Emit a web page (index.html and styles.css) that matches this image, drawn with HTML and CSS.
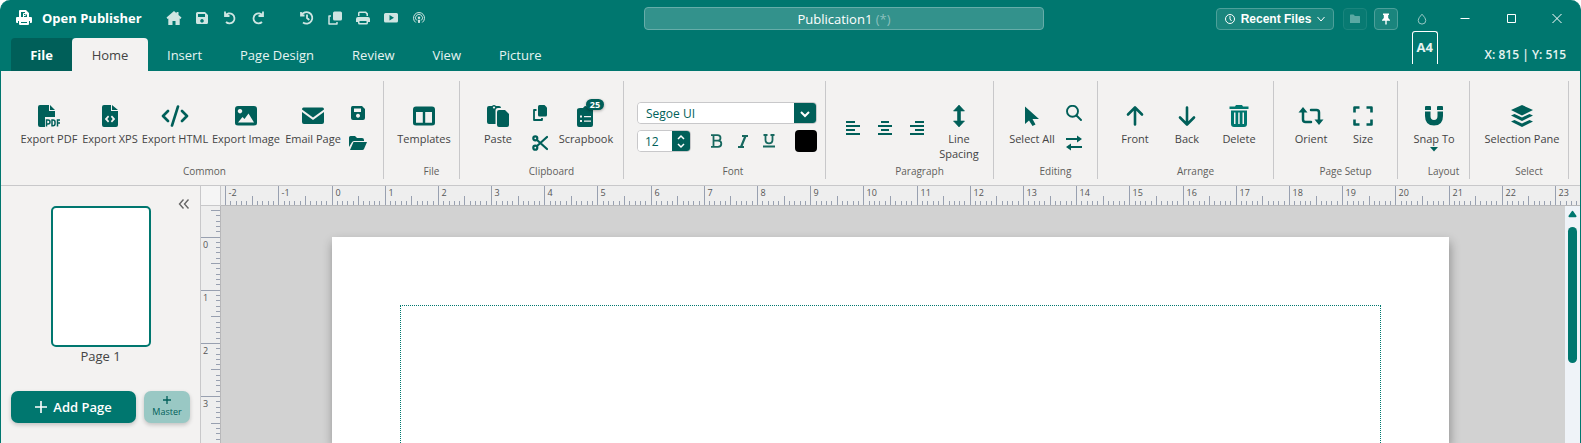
FILE: index.html
```html
<!DOCTYPE html>
<html lang="en">
<head>
<meta charset="utf-8">
<title>Open Publisher</title>
<link rel="stylesheet" href="styles.css">
</head>
<body>
<div class="app">
  <header class="titlebar">
    <div class="title-left">
      <svg class="logo" viewBox="0 0 18 18" fill="currentColor"><path d="M4 8V2q0-1 1-1h6l3 3v4h-2V5h-2V3H6v5zM2 8h14q1 0 1 1v4q0 1-1 1h-1v-2H3v2H2q-1 0-1-1V9q0-1 1-1zM4 12h10v3q0 1-1 1H5q-1 0-1-1zm2 1v1h6v-1z" fill-rule="evenodd"/><path d="M8.500 8V4.500H10q1 0 1 1t-1 1H8.500" fill="none" stroke="currentColor"/></svg>
      <h1 class="brand">Open Publisher</h1>
      <div class="quick">
        <button class="quick-btn" aria-label="Start"><svg viewBox="0 0 16 16"><path d="M8 1 0.500 7.600 1.500 9l.8-.6V15h4.200v-4h3v4h4.200V8.400l.8.6 1-1.400L12.500 5V2h-2v1.200z"/></svg></button>
        <button class="quick-btn" aria-label="Save"><svg viewBox="0 0 16 16"><path fill-rule="evenodd" d="M3.500 2H11l3 3v7.500q0 1.500-1.500 1.500h-9Q2 14 2 12.500v-9Q2 2 3.500 2zM4 4v3h7V4zm4 5a1.800 1.800 0 1 0 .01 0z"/></svg></button>
        <button class="quick-btn" aria-label="Undo"><svg viewBox="0 0 16 16" class="line"><path d="M3 1.500V6h4.500M3.200 5.800A5 5 0 1 1 4 12"/></svg></button>
        <button class="quick-btn" aria-label="Redo"><svg viewBox="0 0 16 16" class="line"><path d="M13 1.500V6H8.500M12.800 5.800A5 5 0 1 0 12 12"/></svg></button>
      </div>
      <div class="quick">
        <button class="quick-btn" aria-label="History"><svg viewBox="0 0 16 16" class="line"><path d="M2 2v3.500h3.500M2.300 5.300A5.800 5.800 0 1 1 4 12.500M8 4.500V8l2.300 2"/></svg></button>
        <button class="quick-btn" aria-label="Copy"><svg viewBox="0 0 16 16"><rect x="6" y="1.500" width="9" height="9" rx="1.500"/><path d="M4 6H2v8h8v-2" fill="none" stroke="currentColor" stroke-width="1.500" stroke-linejoin="round"/></svg></button>
        <button class="quick-btn" aria-label="Print"><svg viewBox="0 0 16 16"><path fill-rule="evenodd" d="M3 6V3q0-1.500 1.500-1.500H11L13 3.500V6h-1.500V4.500L10.300 3H4.500v3zM3 7h10q2 0 2 2v3h-2v-2H3v2H1V9q0-2 2-2zM3 10h10v3q0 1.500-1.500 1.500h-7Q3 14.500 3 13zm1.500 1v2h7v-2z"/></svg></button>
        <button class="quick-btn" aria-label="Present"><svg viewBox="0 0 16 16"><path fill-rule="evenodd" d="M2.500 3h11Q15 3 15 4.500v6.500q0 1.500-1.500 1.500h-11Q1 12.500 1 11V4.500Q1 3 2.500 3zM6.500 5v5.500L11 7.800z"/></svg></button>
        <button class="quick-btn" aria-label="Broadcast"><svg viewBox="0 0 16 16"><g fill="none" stroke="currentColor"><path d="M4.800 12.500a5.500 5.500 0 1 1 6.400 0"/><path d="M5.500 10.300a3.500 3.500 0 1 1 5 0"/></g><circle cx="8" cy="7.800" r="1.300"/><path d="M6.700 9.800h2.600L8.800 13H7.200z"/></svg></button>
      </div>
    </div>
    <div class="doc-name">Publication1 <span class="doc-dirty">(*)</span></div>
    <div class="title-right">
      <button class="chip recent"><svg class="i12 thin" viewBox="0 0 12 12"><circle cx="6" cy="6" r="4.500"/><path d="M6 3v3l1.500 2"/></svg>Recent Files<svg class="i10 thin" viewBox="0 0 10 10"><path d="M1.500 3 5 7l3.500-4"/></svg></button>
      <button class="chip square faint" aria-label="Folder"><svg class="i12" viewBox="0 0 12 12"><path d="M1.500 1.500h3L6 3h4.500l.5.500V10H1V2z"/></svg></button>
      <button class="chip square" aria-label="Pin"><svg class="i12" viewBox="0 0 12 12"><path d="M3 .5h6V2H8.200v3L10 7v.8H6.700v3.700H5.300V7.800H2V7l1.800-2V2H3z"/></svg></button>
      <button class="win drop" aria-label="Theme"><svg class="i12 thin" viewBox="0 0 12 12"><path d="M6 1.200Q2.200 5.200 2.200 7.300a3.800 3.800 0 0 0 7.600 0Q9.800 5.200 6 1.200z"/></svg></button>
      <button class="win" aria-label="Minimize"><svg class="i12 thin" viewBox="0 0 12 12"><path d="M1.500 5.500h9"/></svg></button>
      <button class="win" aria-label="Maximize"><svg class="i12 thin" viewBox="0 0 12 12"><path d="M2.500 1.500h8v8h-8z"/></svg></button>
      <button class="win" aria-label="Close"><svg class="i12 thin" viewBox="0 0 12 12"><path d="M1.500 1l9 9M10.500 1l-9 9"/></svg></button>
    </div>
  </header>

  <nav class="tabs">
    <button class="tab tab-file">File</button>
    <button class="tab tab-active">Home</button>
    <button class="tab">Insert</button>
    <button class="tab">Page Design</button>
    <button class="tab">Review</button>
    <button class="tab">View</button>
    <button class="tab">Picture</button>
    <div class="status">
      <span class="paper">A4</span>
      <span class="coords">X: 815 | Y: 515</span>
    </div>
  </nav>

  <section class="ribbon">
    <div class="group g-common">
      <div class="tools">
        <button class="tool w54"><svg viewBox="0 0 22 22"><path d="M2 0h9v6h6v6H7v10H2Q0 22 0 20V2Q0 0 2 0zM12 0l5 5h-5z"/><path d="M8.500 21.500V15H10q2 0 2 2t-2 2H8.500M14 15v5.700h1q2 0 2-2V17q0-2-2-2zM19.500 21.500V15H22M19.500 18H22" fill="none" stroke="currentColor" stroke-width="1.500"/></svg>Export PDF</button>
        <button class="tool w52"><svg viewBox="0 0 22 22"><path fill-rule="evenodd" d="M5 0h7v6h7v14q0 2-2 2H5q-2 0-2-2V2Q3 0 5 0zM13 0l6 5h-6zM9 10.500 5.800 14 9 17.500l1.200-1.200L8.300 14l1.900-2.300zm4 0-1.200 1.200 1.900 2.300-1.900 2.300 1.200 1.200 3.200-3.500z"/></svg>Export XPS</button>
        <button class="tool w62"><svg class="wide outline" viewBox="0 0 28 22" stroke-width="2.600" stroke-linecap="round" stroke-linejoin="round"><path d="M7 6 2 11l5 5M21 6l5 5-5 5M17 1.500l-6 19"/></svg>Export HTML</button>
        <button class="tool w64"><svg viewBox="0 0 22 22"><path fill-rule="evenodd" d="M3 1h16q3 0 3 3v14q0 2.500-3 2.500H3q-3 0-3-2.500V4q0-3 3-3zM5 4a2.200 2.200 0 1 0 .01 0zM3 17.500h16L13.500 8.500 9.500 14 7.500 12z"/></svg>Export Image</button>
        <button class="tool w54"><svg viewBox="0 0 22 22"><path d="M1.500 2.500h19q1.500 0 1.500 2L11 12.500 0 4.500q0-2 1.500-2zM0 7l11 8 11-8v10q0 2-2 2H2q-2 0-2-2z"/></svg>Email Page</button>
        <div class="stack">
          <button class="mini" aria-label="Save"><svg viewBox="0 0 16 16"><path fill-rule="evenodd" d="M2.500 1H12l3 3v9q0 2-2 2H3q-2 0-2-2V3q0-2 1.500-2zM4 3.500V7h7V3.500zm4 5.200a2 2 0 1 0 .01 0z"/></svg></button>
          <button class="mini" aria-label="Open"><svg class="folder" viewBox="0 0 18 16"><path d="M0 12V2.500Q0 1 1.500 1H6l2 2h5q2 0 2 2v1H5Q3.500 6 2.800 7.500zM4.500 7H18l-3 7q-.5 1-1.500 1H1z"/></svg></button>
        </div>
      </div>
      <div class="group-name">Common</div>
    </div>

    <div class="group g-file">
      <div class="tools">
        <button class="tool w48"><svg viewBox="0 0 22 22"><path fill-rule="evenodd" d="M3 1.500h16q3 0 3 3V18q0 2.500-3 2.500H3Q0 20.500 0 18V4.500q0-3 3-3zM3 7v10.700h6.800V7zm9.200 0v10.700H19V7z"/></svg>Templates</button>
      </div>
      <div class="group-name">File</div>
    </div>

    <div class="group g-clip">
      <div class="tools">
        <button class="tool w44"><svg viewBox="0 0 22 22"><path fill-rule="evenodd" d="M2 1h3q2-2 4 0h3q2 0 2 2H11q-2.500 0-2.500 2.500V19H2q-2 0-2-2V3q0-2 2-2zM7 1.500a1 1 0 1 0 .01 0zM12 5h6l4 4v11q0 2-2 2h-8q-2 0-2-2V7q0-2 2-2z"/></svg>Paste</button>
        <div class="stack">
          <button class="mini" aria-label="Copy"><svg viewBox="0 0 16 16"><path d="M7.500 0h5L15 2.500V10q0 1.500-1.500 1.500h-6Q6 11.500 6 10V1.500Q6 0 7.500 0z"/><path d="M4.500 5H2v10h8v-2" fill="none" stroke="currentColor" stroke-width="1.800" stroke-linejoin="round"/></svg></button>
          <button class="mini" aria-label="Cut"><svg class="outline" viewBox="0 0 16 16" stroke-width="2.200" stroke-linecap="round"><circle cx="3.300" cy="3.300" r="2"/><circle cx="3.300" cy="12.700" r="2"/><path d="M5 5l10 9M5 11l10-9"/></svg></button>
        </div>
        <button class="tool w52 has-badge"><svg viewBox="0 0 22 22"><path fill-rule="evenodd" d="M5 3h3q2.500-4 5 0h3q2 0 2 2v15q0 2-2 2H4Q2 22 2 20V5q0-2 3-2zM5 10.500v2h2v-2zm4 .5v1.300h7V11zM5 15v2h2v-2zm4 .5v1.300h7v-1.300z"/></svg><span class="badge">25</span>Scrapbook</button>
      </div>
      <div class="group-name">Clipboard</div>
    </div>

    <div class="group g-font">
      <div class="font-box">
        <div class="combo">
          <select aria-label="Font family"><option>Segoe UI</option></select>
          <svg viewBox="0 0 22 20"><path d="M7 9l4 4 4-4"/></svg>
        </div>
        <div class="font-row">
          <div class="spin">
            <input type="text" value="12" aria-label="Font size">
            <svg viewBox="0 0 18 20"><path d="M6 8l3-3 3 3M6 13l3 3 3-3"/></svg>
          </div>
          <div class="styles">
            <button class="fmt" aria-label="Bold"><svg viewBox="0 0 14 14"><path d="M1 1.200h6.500q3 0 3 2.700T7.500 6.700H4M3.500 1v12M1 12.800h7q3.300 0 3.300-3T8 6.700"/></svg></button>
            <button class="fmt" aria-label="Italic"><svg viewBox="0 0 14 14"><path d="M6 2h6M2 13h6M9.500 2L5 13" stroke-width="2.200"/></svg></button>
            <button class="fmt" aria-label="Underline"><svg viewBox="0 0 14 14"><path d="M1.500 1h4M8.500 1h4M3.500 1v5q0 3.300 3.500 3.300T10.500 6V1M1 12.500h12"/></svg></button>
          </div>
          <button class="swatch" aria-label="Font colour"></button>
        </div>
      </div>
      <div class="group-name">Font</div>
    </div>

    <div class="group g-para">
      <div class="tools">
        <button class="align" aria-label="Align left"><svg viewBox="0 0 14 14"><path d="M0 1h9M0 5h14M0 9h9M0 13h14"/></svg></button>
        <button class="align" aria-label="Align centre"><svg viewBox="0 0 14 14"><path d="M3 1h8M0 5h14M3 9h8M0 13h14"/></svg></button>
        <button class="align" aria-label="Align right"><svg viewBox="0 0 14 14"><path d="M5 1h9M0 5h14M5 9h9M0 13h14"/></svg></button>
        <button class="tool w42"><svg viewBox="0 0 22 22"><path d="M11 0l5.500 6h-4v10h4L11 22l-5.500-6h4V6h-4z" stroke="currentColor" stroke-width=".6" stroke-linejoin="round"/></svg>Line<br>Spacing</button>
      </div>
      <div class="group-name">Paragraph</div>
    </div>

    <div class="group g-edit">
      <div class="tools">
        <button class="tool w44"><svg viewBox="0 0 22 22"><path d="M4 1.500v17.500l4-3.500 3.500 5.500 3-1.500-3-5.500H18z"/></svg>Select All</button>
        <div class="stack">
          <button class="mini" aria-label="Find"><svg class="outline" viewBox="0 0 16 16" stroke-width="1.900" stroke-linecap="round"><circle cx="6.500" cy="6.300" r="5.500"/><path d="M10.500 10.500 15 15"/></svg></button>
          <button class="mini" aria-label="Replace"><svg viewBox="0 0 16 16"><path d="M0 3h11V.5L16 4l-5 3.500V5H0zM16 11H5V8.500L0 12l5 3.500V13h11z"/></svg></button>
        </div>
      </div>
      <div class="group-name">Editing</div>
    </div>

    <div class="group g-arr">
      <div class="tools">
        <button class="tool w42"><svg class="arrow" viewBox="0 0 22 22"><path d="M11 19.500V3M4 9.500l7-7 7 7"/></svg>Front</button>
        <button class="tool w42"><svg class="arrow" viewBox="0 0 22 22"><path d="M11 2.500V19M4 12.500l7 7 7-7"/></svg>Back</button>
        <button class="tool w42 danger"><svg viewBox="0 0 22 22"><path fill-rule="evenodd" d="M8 0h6l1 1.500h5.500V4h-19V1.500H7zM3 5.500h16V19q0 3-3 3H6q-3 0-3-3zM6 7.500V19h1.500V7.500zm4.200 0V19h1.500V7.500zm4.300 0V19H16V7.500z"/></svg>Delete</button>
      </div>
      <div class="group-name">Arrange</div>
    </div>

    <div class="group g-page">
      <div class="tools">
        <button class="tool w42"><svg class="wide" viewBox="0 0 26 22"><path d="M5 5v9.500Q5 17 7.500 17H13M13 5h5.500Q21 5 21 7.500V17" fill="none" stroke="currentColor" stroke-width="2.500" stroke-linecap="round"/><path d="M5 2l4.500 5.500h-9zM21 20l4.500-5.500h-9z"/></svg>Orient</button>
        <button class="tool w42"><svg class="frame" viewBox="0 0 22 22"><path d="M2.500 7.500V2.500h5M14.500 2.500h5v5M19.500 14.500v5h-5M7.500 19.500h-5v-5"/></svg>Size</button>
      </div>
      <div class="group-name">Page Setup</div>
    </div>

    <div class="group g-layout">
      <div class="tools">
        <button class="tool w40"><svg viewBox="0 0 22 22"><path d="M2 2q0-1 1-1h4q1 0 1 1v3H2zM14 2q0-1 1-1h4q1 0 1 1v3h-6zM2 6.500h5.500V11q0 4 3.500 4t3.500-4V6.500H20V11q0 9.500-9 9.500T2 11z"/></svg>Snap To<svg class="caret" viewBox="0 0 8 5"><path d="M0 0h8L4 4.500z"/></svg></button>
      </div>
      <div class="group-name">Layout</div>
    </div>

    <div class="group g-select">
      <div class="tools">
        <button class="tool w72"><svg viewBox="0 0 22 22"><path d="M11 0l11 5-11 5.500L0 5zM0 10.500l3.500-1.600L11 12.500l7.500-3.600 3.500 1.600-11 5.500zM0 16.500l3.500-1.600L11 18.500l7.500-3.600 3.500 1.600L11 22z"/></svg>Selection Pane</button>
      </div>
      <div class="group-name">Select</div>
    </div>
  </section>

  <main class="main">
    <aside class="pages">
      <div class="page-list">
        <button class="thumb" aria-label="Page 1"></button>
        <button class="collapse" aria-label="Collapse"><svg viewBox="0 0 12 10"><path d="M5.500 .5 1.500 5l4 4.500M10.500 .5l-4 4.500 4 4.500"/></svg></button>
      </div>
      <div class="page-label">Page 1</div>
      <div class="page-actions">
        <button class="add"><svg viewBox="0 0 12 12"><path d="M6 0v12M0 6h12"/></svg>Add Page</button>
        <button class="master"><svg viewBox="0 0 8 8"><path d="M4 0v8M0 4h8"/></svg>Master</button>
      </div>
    </aside>
    <div class="corner"></div>
    <svg class="ruler ruler-h"></svg>
    <svg class="ruler ruler-v"></svg>
    <div class="canvas"><div class="sheet"><div class="margins"></div></div></div>
    <div class="scroll">
      <svg viewBox="0 0 10 8"><path d="M5 1.500 8.500 6.500h-7z"/></svg>
      <div class="scroll-thumb"></div>
    </div>
  </main>
</div>
<script src="rulers.js"></script>
</body>
</html>
```

FILE: styles.css
```css
:root {
  --teal: #00776f;
  --deep: #005f59;
  --panel: #f3f2f1;
  --line: #c8c8ca;
}
* { box-sizing: border-box; }
body {
  margin: 0;
  background: #fff;
  font-family: "Open Sans", "Noto Sans", sans-serif;
  font-size: 12px;
  color: #444;
}
button {
  padding: 0;
  border: 0;
  background: none;
  font: inherit;
  color: inherit;
  flex-shrink: 0;
}
svg { display: block; fill: currentColor; flex-shrink: 0; }
.app {
  display: flex;
  flex-direction: column;
  height: 100vh;
  overflow: hidden;
  background: var(--teal);
  border: solid var(--teal);
  border-width: 0 1px;
  border-radius: 10px 10px 0 0;
}

/* title bar */
.titlebar {
  display: grid;
  grid-template-columns: 643fr 400fr 536fr;
  align-items: center;
  height: 37px;
  color: #fff;
}
.title-left { display: flex; align-items: center; padding: 0 0 2px 14px; }
.logo { width: 18px; height: 18px; }
.brand { margin: 0 20px 0 9px; width: 98px; font-size: 13px; font-weight: 700; white-space: nowrap; }
.quick { display: flex; margin-right: 21px; color: #cfe5e2; }
.quick-btn { width: 28px; display: flex; justify-content: center; }
.quick-btn svg { width: 16px; height: 16px; }
.line { fill: none; stroke: currentColor; stroke-width: 1.8; }
.thin, .outline { fill: none; stroke: currentColor; }
.i12 { width: 12px; height: 12px; }
.i10 { width: 10px; height: 10px; }
.doc-name {
  height: 23px;
  line-height: 22px;
  text-align: center;
  font-size: 13px;
  background: #33928c;
  border: 1px solid #66ada9;
  border-radius: 4px;
}
.doc-dirty { color: #8bc0bd; }
.title-right { display: flex; align-items: center; justify-content: flex-end; padding-right: 9px; }
.chip {
  display: flex;
  align-items: center;
  justify-content: center;
  height: 22px;
  border: 1px solid #4da09a;
  border-radius: 4px;
  background: #1a857d;
}
.recent { width: 118px; gap: 5px; font: bold 12px "Liberation Sans", Arial, sans-serif; margin-right: 9px; }
.square { width: 24px; }
.faint { margin-right: 7px; background: #087a72; border-color: #1a857d; color: #5aa9a3; }
.win { display: flex; justify-content: center; width: 28px; margin-left: 18px; }
.win.drop { width: 24px; margin: 0 12px; color: #99c9c5; }
.win.drop + .win { margin-left: 5px; }

/* tabs */
.tabs { display: flex; height: 34px; padding: 1px 0 0 10px; color: #e6f4f2; font-size: 13px; }
.tab { padding: 0 19px; height: 33px; }
.tab-file { width: 61px; font-weight: 700; background: var(--deep); color: #fff; border-radius: 4px 0 0 0; }
.tab-active { width: 76px; background: var(--panel); color: #444; border-radius: 4px 4px 0 0; }
.status { display: flex; margin-left: auto; padding-right: 14px; font-weight: 600; font-size: 12px; white-space: nowrap; }
.paper {
  width: 26px;
  height: 33px;
  margin: -7px 47px 0 0;
  line-height: 31px;
  text-align: center;
  font-size: 13px;
  font-weight: 700;
  border: 1px solid #fff;
  border-bottom: 0;
  border-radius: 3px 3px 0 0;
}
.coords { line-height: 33px; }

/* ribbon */
.ribbon {
  display: grid;
  grid-template-columns:
    minmax(0, 383fr) minmax(0, 76fr) minmax(0, 164fr) minmax(0, 202fr) minmax(0, 168fr)
    minmax(0, 104fr) minmax(0, 176fr) minmax(0, 124fr) minmax(0, 72fr) minmax(0, 99fr);
  height: 115px;
  padding: 10px 11px 10px 0;
  background: var(--panel);
  border-bottom: 1px solid var(--line);
}
.group {
  display: flex;
  flex-direction: column;
  padding: 24px 0 0 16px;
  border-right: 1px solid var(--line);
}
.g-common { padding-left: 21px; }
.g-font { padding: 21px 0 0 13px; }
.tools { display: flex; flex-shrink: 0; gap: 10px; height: 56px; }
.g-common .tools { gap: 8px; }
.tool {
  display: flex;
  flex-direction: column;
  align-items: center;
  align-self: flex-start;
  white-space: nowrap;
  font-size: 11px;
  line-height: 15px;
}
.tool svg { width: 22px; height: 22px; margin-bottom: 4px; color: var(--deep); }
.tool .wide { width: 28px; }
.tool .caret { width: 8px; height: 5px; margin: 1px 0 0; }
.tool.danger svg { color: var(--teal); }
.w40 { width: 40px; }
.w42 { width: 42px; }
.w44 { width: 44px; }
.w48 { width: 48px; }
.w52 { width: 52px; }
.w54 { width: 54px; }
.w62 { width: 62px; }
.w64 { width: 64px; }
.w72 { width: 72px; }
.arrow, .frame { fill: none; stroke: currentColor; stroke-width: 2.6; stroke-linecap: round; stroke-linejoin: round; }
.frame { stroke-linecap: butt; }
.stack { display: flex; flex-direction: column; gap: 14px; width: 20px; color: var(--deep); }
.mini { display: flex; justify-content: center; height: 16px; }
.mini svg { width: 16px; height: 16px; }
.mini .folder { width: 18px; }
.has-badge { position: relative; }
.badge {
  position: absolute;
  top: -6px;
  right: 8px;
  width: 18px;
  height: 11px;
  border-radius: 6px;
  background: var(--deep);
  color: #fff;
  font-size: 9px;
  font-weight: 700;
  line-height: 11px;
  box-shadow: 0 1px 3px #0005;
}
.align { width: 22px; height: 46px; display: flex; align-items: center; justify-content: center; color: var(--deep); }
.align svg { width: 14px; height: 14px; stroke: currentColor; stroke-width: 2; }
.group-name {
  flex-shrink: 0;
  margin-top: 2px;
  padding-left: 4px;
  text-align: center;
  font-size: 10px;
  line-height: 16px;
  color: #605e5c;
  white-space: nowrap;
}
.font-box { display: flex; flex-direction: column; flex-shrink: 0; gap: 6px; width: 180px; height: 59px; }
.combo, .spin {
  display: grid;
  height: 22px;
  border: 1px solid var(--line);
  border-radius: 4px;
  overflow: hidden;
  background: #fff;
}
.combo { grid-template-columns: 1fr 22px; }
.combo select {
  grid-area: 1 / 1 / 2 / 3;
  appearance: none;
  padding: 0 8px;
  border: 0;
  background: #fff;
  font: inherit;
  color: var(--deep);
}
.combo svg { grid-area: 1 / 2 / 2 / 3; pointer-events: none; }
.combo svg, .spin svg { width: 100%; height: 20px; background: var(--deep); color: #fff; fill: none; stroke: currentColor; stroke-width: 2; z-index: 1; }
.spin svg { stroke-width: 1.5; }
.spin { grid-template-columns: 1fr 18px; width: 54px; }
.spin input { min-width: 0; padding: 0 7px; border: 0; font: inherit; color: var(--deep); }
.font-row { display: flex; justify-content: space-between; }
.styles { display: flex; }
.fmt { width: 26px; display: flex; justify-content: center; align-items: center; color: #17685f; }
.fmt svg { width: 14px; height: 14px; fill: none; stroke: currentColor; stroke-width: 1.8; }
.swatch { width: 22px; height: 22px; border-radius: 4px; background: #000; }

/* work area */
.main {
  flex: 1;
  min-height: 0;
  display: grid;
  grid-template: 20px 1fr / 200px 20px 1fr 15px;
}
.pages { grid-row: 1 / 3; background: var(--panel); border-right: 1px solid var(--line); padding-top: 20px; }
.page-list { display: grid; grid-template-columns: 1fr 100px 1fr; }
.thumb { grid-column: 2; height: 141px; border: 2px solid var(--teal); border-radius: 5px; background: #fff; }
.collapse { align-self: start; justify-self: end; margin: -7px 10px 0 0; color: #666; }
.collapse svg { width: 12px; height: 10px; fill: none; stroke: currentColor; stroke-width: 1.4; }
.page-label { text-align: center; font-size: 13px; line-height: 18px; }
.page-actions { display: flex; gap: 8px; padding: 26px 10px 0; }
.add, .master { height: 32px; border-radius: 7px; box-shadow: 0 2px 4px #0003; }
.add { flex: 1; display: flex; align-items: center; justify-content: center; gap: 6px; background: var(--teal); color: #fff; font-size: 13px; font-weight: 600; }
.add svg { width: 12px; height: 12px; stroke: currentColor; stroke-width: 1.6; }
.master { width: 46px; display: flex; flex-direction: column; align-items: center; justify-content: center; background: #99c8c4; color: var(--deep); font-size: 9px; line-height: 12px; }
.master svg { width: 8px; height: 8px; margin-bottom: 2px; stroke: currentColor; stroke-width: 1.3; }
.corner { background: #f5f5f5; border: solid var(--line); border-width: 0 1px 1px 0; }
.ruler { background: #eee; width: 100%; height: 100%; overflow: hidden; }
.ruler line { stroke: #98a0b0; shape-rendering: crispEdges; }
.ruler text { fill: #555; font-size: 9px; }
.ruler-h { grid-column: 3 / 5; border-bottom: 1px solid #b8b8ba; }
.ruler-v { grid-column: 2; border-right: 1px solid #b8b8ba; min-height: 0; }
.canvas { display: flex; min-height: 0; overflow: hidden; background: #d2d2d2; padding: 31px 116px 0 111px; }
.sheet { flex: 1; padding: 68px 68px 0 68px; background: #fff; box-shadow: 1px 5px 10px #0005; }
.margins { height: 100%; border: 1px dotted var(--teal); border-bottom: 0; }
.scroll { background: #eff3f8; padding: 4px 3px; color: var(--teal); }
.scroll svg { width: 9px; height: 8px; margin-bottom: 9px; stroke: currentColor; stroke-width: 2; stroke-linejoin: round; }
.scroll-thumb { width: 9px; height: 136px; border-radius: 5px; background: currentColor; }
```

FILE: rulers.js
```js
// Both rulers use the on-screen width of a 21 cm sheet as their scale.
const NS = 'http://www.w3.org/2000/svg';
const SHEET_CM = 21;

function add(svg, name, attrs, text) {
  const el = document.createElementNS(NS, name);
  for (const key in attrs) el.setAttribute(key, attrs[key]);
  if (text !== undefined) el.textContent = text;
  svg.appendChild(el);
}

function drawRuler(svg, vertical, origin, unit, first) {
  svg.replaceChildren();
  const box = svg.getBoundingClientRect();
  const length = vertical ? box.height : box.width;
  for (let i = first; origin + i * unit / 10 < length; i++) {
    const at = Math.floor(origin + i * unit / 10) + 0.5;
    const size = i % 10 === 0 ? 20 : i % 5 === 0 ? 10 : 5;
    const start = 20 - size;
    add(svg, 'line', vertical
      ? { x1: start, x2: 20, y1: at, y2: at }
      : { x1: at, x2: at, y1: start, y2: 20 });
    if (i % 10 === 0) {
      add(svg, 'text', vertical ? { x: 2, y: at + 10 } : { x: at + 3, y: 10 }, i / 10);
    }
  }
}

function draw() {
  const sheet = document.querySelector('.sheet').getBoundingClientRect();
  const h = document.querySelector('.ruler-h');
  const v = document.querySelector('.ruler-v');
  const unit = sheet.width / SHEET_CM;
  drawRuler(h, false, sheet.left - h.getBoundingClientRect().left, unit, -20);
  drawRuler(v, true, sheet.top - v.getBoundingClientRect().top, unit, -5);
}

draw();
window.addEventListener('resize', draw);
```
